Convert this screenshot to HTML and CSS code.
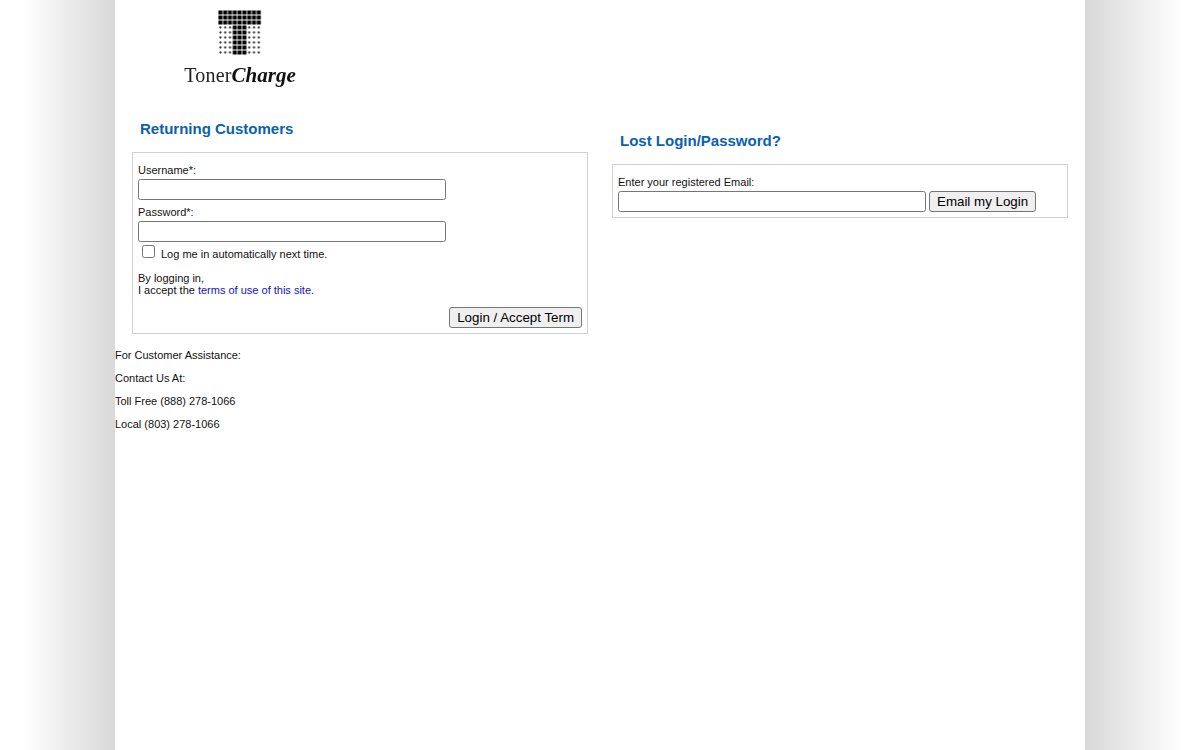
FILE: index.html
```html
<!DOCTYPE html>
<html lang="en">
<head>
<meta charset="utf-8">
<title>TonerCharge Login</title>
<link rel="stylesheet" href="styles.css">
</head>
<body>
<div class="page">
  <header class="logo-row">
    <div class="logo">
      <svg class="logo-mark" width="44" height="46" viewBox="0 0 44 46" aria-hidden="true">
        <defs>
          <pattern id="big" width="4.8" height="5" patternUnits="userSpaceOnUse">
            <rect x="0.4" y="0.5" width="4" height="4" fill="#000"/>
          </pattern>
          <pattern id="dot" width="4.8" height="5" patternUnits="userSpaceOnUse">
            <circle cx="2.4" cy="2.5" r="1.15" fill="#333"/>
          </pattern>
        </defs>
        <rect x="0" y="0" width="43.2" height="15" fill="url(#big)"/>
        <rect x="0" y="15" width="14.4" height="30" fill="url(#dot)"/>
        <rect x="14.4" y="15" width="14.4" height="30" fill="url(#big)"/>
        <rect x="28.8" y="15" width="14.4" height="30" fill="url(#dot)"/>
      </svg>
      <div class="logo-text">Toner<em>Charge</em></div>
    </div>
  </header>
  <main class="columns">
    <section class="col col-login">
      <h2>Returning Customers</h2>
      <form class="box">
        <label class="field-label">Username*:</label>
        <input class="text-input" type="text">
        <label class="field-label second">Password*:</label>
        <input class="text-input" type="password">
        <div class="remember"><input type="checkbox" class="check"><span>Log me in automatically next time.</span></div>
        <p class="terms">By logging in,<br>I accept the <a href="#">terms of use of this site</a>.</p>
        <div class="actions"><button type="button">Login / Accept Term</button></div>
      </form>
    </section>
    <section class="col col-lost">
      <h2>Lost Login/Password?</h2>
      <form class="box">
        <label class="field-label">Enter your registered Email:</label>
        <div class="email-row"><input class="text-input" type="text"><button type="button">Email my Login</button></div>
      </form>
    </section>
  </main>
  <footer class="contact">
    <p>For Customer Assistance:</p>
    <p>Contact Us At:</p>
    <p>Toll Free (888) 278-1066</p>
    <p>Local (803) 278-1066</p>
  </footer>
</div>
</body>
</html>
```
FILE: styles.css
```css
* { box-sizing: border-box; }
html, body { height: 100%; }
body {
  margin: 0;
  height: 750px;
  overflow: hidden;
  font-family: "Liberation Sans", Arial, sans-serif;
  font-size: 11px;
  color: #111;
  background: linear-gradient(to right, #fff 22px, #d8d8d8 115px, #d8d8d8 1085px, #fff 1182px);
}
.page {
  width: 970px;
  height: 750px;
  margin: 0 auto;
  background: #fff;
}
.logo-row { height: 107px; padding: 10px 0 0 68px; }
.logo { width: 114px; display: flex; flex-direction: column; align-items: center; filter: blur(0.35px); }
.logo-mark { display: block; }
.logo-text {
  margin-top: 9px;
  font-family: "Liberation Serif", "Times New Roman", serif;
  font-size: 20px;
  line-height: 20px;
  letter-spacing: 0.2px;
  color: #222;
  white-space: nowrap;
}
.logo-text em { font-weight: bold; color: #111; font-size: 21px; letter-spacing: 0; }
.columns { display: flex; align-items: flex-start; padding-left: 17px; gap: 24px; }
.col { width: 456px; }
.col-login { padding-top: 13px; }
.col-lost { padding-top: 25px; }
h2 {
  margin: 0 0 14px 8px;
  font-size: 15px;
  line-height: 18px;
  font-weight: bold;
  color: #0b60ae;
}
.box {
  border: 1px solid #d2d2d2;
  padding: 11px 5px 5px;
  background: #fff;
}
.field-label { display: block; line-height: 13px; margin-bottom: 2px; }
.second { margin-top: 6px; }
.text-input {
  display: block;
  width: 308px;
  height: 21px;
  padding: 1px 2px;
  border: 1px solid #767676;
  border-radius: 2.5px;
  background: #fff;
  margin: 0;
}
.remember { display: flex; align-items: flex-start; height: 22px; padding-left: 4px; }
.check { width: 13px; height: 13px; margin: 3px 6px 0 0; }
.remember span { line-height: 13px; margin-top: 6px; }
.terms { margin: 8px 0 0; line-height: 12px; }
a { color: #1212c4; text-decoration: none; }
.actions { display: flex; justify-content: flex-end; margin-top: 11px; }
button {
  height: 21px;
  padding: 1px 7px;
  border: 1px solid #767676;
  border-radius: 3px;
  background: #efefef;
  font-family: "Liberation Sans", Arial, sans-serif;
  font-size: 13.33px;
  color: #000;
  margin: 0;
}
.email-row { display: flex; gap: 3px; }
.contact { padding-top: 15px; }
.contact p { margin: 0 0 10px; line-height: 13px; }
```
